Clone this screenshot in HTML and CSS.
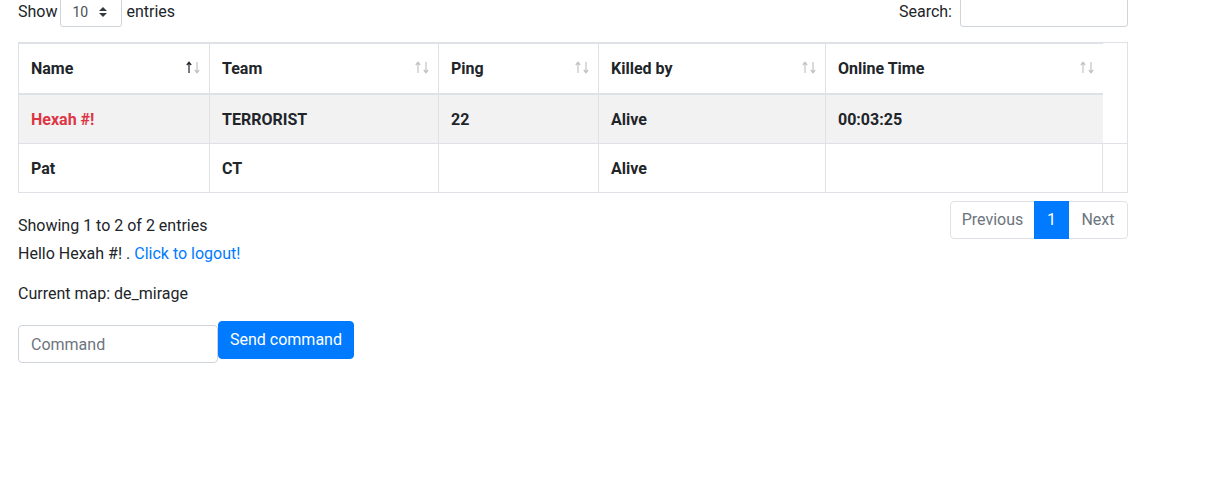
FILE: index.html
```html
<!DOCTYPE html>
<html lang="en">
<head>
<meta charset="utf-8">
<title>Players</title>
<link rel="stylesheet" href="styles.css">
</head>
<body>
<div class="page">
  <div class="dt-top">
    <label class="dt-length">Show
      <span class="fake-select"><span class="fs-val">10</span>
        <svg class="fs-caret" width="8" height="10" viewBox="0 0 4 5"><path d="M2 0L0 2h4zm0 5L0 3h4z" fill="#343a40"/></svg>
      </span>
      entries</label>
    <label class="dt-filter">Search: <input class="input-sm" type="search"></label>
  </div>

  <div class="table-wrap">
    <table class="players">
      <thead>
        <tr>
          <th class="c1"><div class="th-in"><span>Name</span><svg class="sort" width="15" height="13" viewBox="0 0 15 13"><g fill="none" stroke-width="1.2"><path class="up active" d="M3 12V1.5M0.8 4L3 1.3 5.2 4"/><path class="down" d="M11 1v10.5M8.8 9L11 11.7 13.2 9"/></g></svg></div></th>
          <th class="c2"><div class="th-in"><span>Team</span><svg class="sort" width="15" height="13" viewBox="0 0 15 13"><g fill="none" stroke-width="1.2"><path class="up" d="M3 12V1.5M0.8 4L3 1.3 5.2 4"/><path class="down" d="M11 1v10.5M8.8 9L11 11.7 13.2 9"/></g></svg></div></th>
          <th class="c3"><div class="th-in"><span>Ping</span><svg class="sort" width="15" height="13" viewBox="0 0 15 13"><g fill="none" stroke-width="1.2"><path class="up" d="M3 12V1.5M0.8 4L3 1.3 5.2 4"/><path class="down" d="M11 1v10.5M8.8 9L11 11.7 13.2 9"/></g></svg></div></th>
          <th class="c4"><div class="th-in"><span>Killed by</span><svg class="sort" width="15" height="13" viewBox="0 0 15 13"><g fill="none" stroke-width="1.2"><path class="up" d="M3 12V1.5M0.8 4L3 1.3 5.2 4"/><path class="down" d="M11 1v10.5M8.8 9L11 11.7 13.2 9"/></g></svg></div></th>
          <th class="c5"><div class="th-in"><span>Online Time</span><svg class="sort" width="15" height="13" viewBox="0 0 15 13"><g fill="none" stroke-width="1.2"><path class="up" d="M3 12V1.5M0.8 4L3 1.3 5.2 4"/><path class="down" d="M11 1v10.5M8.8 9L11 11.7 13.2 9"/></g></svg></div></th>
          <th class="c6"></th>
        </tr>
      </thead>
      <tbody>
        <tr class="odd">
          <td class="me">Hexah #!</td>
          <td>TERRORIST</td>
          <td>22</td>
          <td>Alive</td>
          <td class="last">00:03:25</td>
          <td class="extra"></td>
        </tr>
        <tr class="even">
          <td>Pat</td>
          <td>CT</td>
          <td></td>
          <td>Alive</td>
          <td class="last"></td>
          <td class="extra"></td>
        </tr>
      </tbody>
    </table>
  </div>

  <div class="dt-bottom">
    <div class="dt-info">Showing 1 to 2 of 2 entries</div>
    <ul class="pagination">
      <li class="pg-item disabled"><span class="page-link first">Previous</span></li>
      <li class="pg-item active"><span class="page-link">1</span></li>
      <li class="pg-item disabled"><span class="page-link last-link">Next</span></li>
    </ul>
  </div>

  <p class="line">Hello Hexah #! . <a class="link" href="#">Click to logout!</a></p>
  <p class="line map">Current map: de_mirage</p>

  <form class="cmd">
    <input class="cmd-input" type="text" placeholder="Command">
    <button class="btn" type="button">Send command</button>
  </form>
</div>
</body>
</html>
```
FILE: styles.css
```css
* { box-sizing: border-box; }
html, body { margin: 0; background: #fff; }
body {
  font-family: Roboto, "Liberation Sans", Arial, sans-serif;
  font-size: 16px;
  line-height: 24px;
  color: #212529;
}
.page {
  width: 1128px;
  padding-left: 18px;
}

/* top controls */
.dt-top {
  display: flex;
  justify-content: space-between;
  align-items: center;
  margin-top: -4px;
  height: 31px;
}
.dt-length, .dt-filter {
  display: flex;
  align-items: center;
  white-space: nowrap;
}
.fake-select {
  display: inline-flex;
  align-items: center;
  justify-content: space-between;
  width: 62px;
  height: 31px;
  margin: 0 4px 0 3px;
  padding: 0 14px 0 11px;
  border: 1px solid #ced4da;
  border-radius: 3px;
  font-size: 14px;
  color: #495057;
}
.fs-caret { display: block; }
.input-sm {
  width: 168px;
  height: 31px;
  margin-left: 8px;
  border: 1px solid #ced4da;
  border-radius: 3px;
  font: inherit;
  font-size: 14px;
  padding: 4px 8px;
}

/* table */
.table-wrap {
  margin-top: 15px;
  border: 1px solid #dee2e6;
}
.players {
  width: 100%;
  table-layout: fixed;
  border-collapse: separate;
  border-spacing: 0;
}
.players th, .players td {
  padding: 12px;
  text-align: left;
  font-weight: 700;
  vertical-align: top;
  border-right: 1px solid #dee2e6;
}
.players th {
  border-top: 1px solid #dee2e6;
  border-bottom: 2px solid #dee2e6;
  padding: 13px 8px 12px 12px;
}
.players .c1 { width: 191px; }
.players .c2 { width: 229px; }
.players .c3 { width: 160px; }
.players .c4 { width: 227px; }
.players .c5 { width: 277px; border-right: 0; }
.players .c6 { width: 24px; border: 0; padding: 0; }
.th-in {
  display: flex;
  justify-content: space-between;
  align-items: center;
  height: 24px;
}
.sort { display: block; margin-top: -3px; }
.sort path { stroke: #212529; opacity: 0.28; }
.sort path.active { opacity: 1; }

.players td { height: 48px; padding-top: 13px; padding-bottom: 11px; }
.players tr.odd td { background: #f2f2f2; border-bottom: 1px solid #dee2e6; }
.players tr.odd td.last { border-right: 0; }
.players tr.odd td.extra { background: #fff; border-right: 0; }
.players tr.even td.extra { border-right: 0; }
.players td.me { color: #dc3545; }

/* bottom */
.dt-bottom {
  display: flex;
  justify-content: space-between;
  align-items: flex-start;
  margin-top: 6px;
}
.dt-info { padding-top: 15px; white-space: nowrap; }
.pagination {
  display: flex;
  list-style: none;
  margin: 2px 0 3px;
  padding: 0;
}
.page-link {
  display: block;
  padding: 8px 0;
  line-height: 20px;
  border: 1px solid #dee2e6;
  margin-left: -1px;
  color: #6c757d;
  background: #fff;
  text-align: center;
}
.page-link.first { margin-left: 0; border-radius: 4px 0 0 4px; width: 85px; }
.page-link.last-link { border-radius: 0 4px 4px 0; width: 60px; }
.pg-item.active .page-link {
  background: #007bff;
  border-color: #007bff;
  color: #fff;
  width: 35px;
  position: relative;
  z-index: 1;
}

.line { margin: 0 0 16px; }
.line.map { margin-bottom: 15px; }
.link { color: #007bff; text-decoration: none; }

.cmd {
  display: flex;
  align-items: flex-start;
}
.cmd-input {
  width: 200px;
  height: 38px;
  margin-top: 4px;
  padding: 6px 12px;
  border: 1px solid #ced4da;
  border-radius: 4px;
  font: inherit;
  color: #495057;
}
.cmd-input::placeholder { color: #6c757d; }
.btn {
  height: 38px;
  padding: 6px 11px;
  border: 1px solid #007bff;
  border-radius: 4px;
  background: #007bff;
  color: #fff;
  font: inherit;
  line-height: 24px;
}
```
